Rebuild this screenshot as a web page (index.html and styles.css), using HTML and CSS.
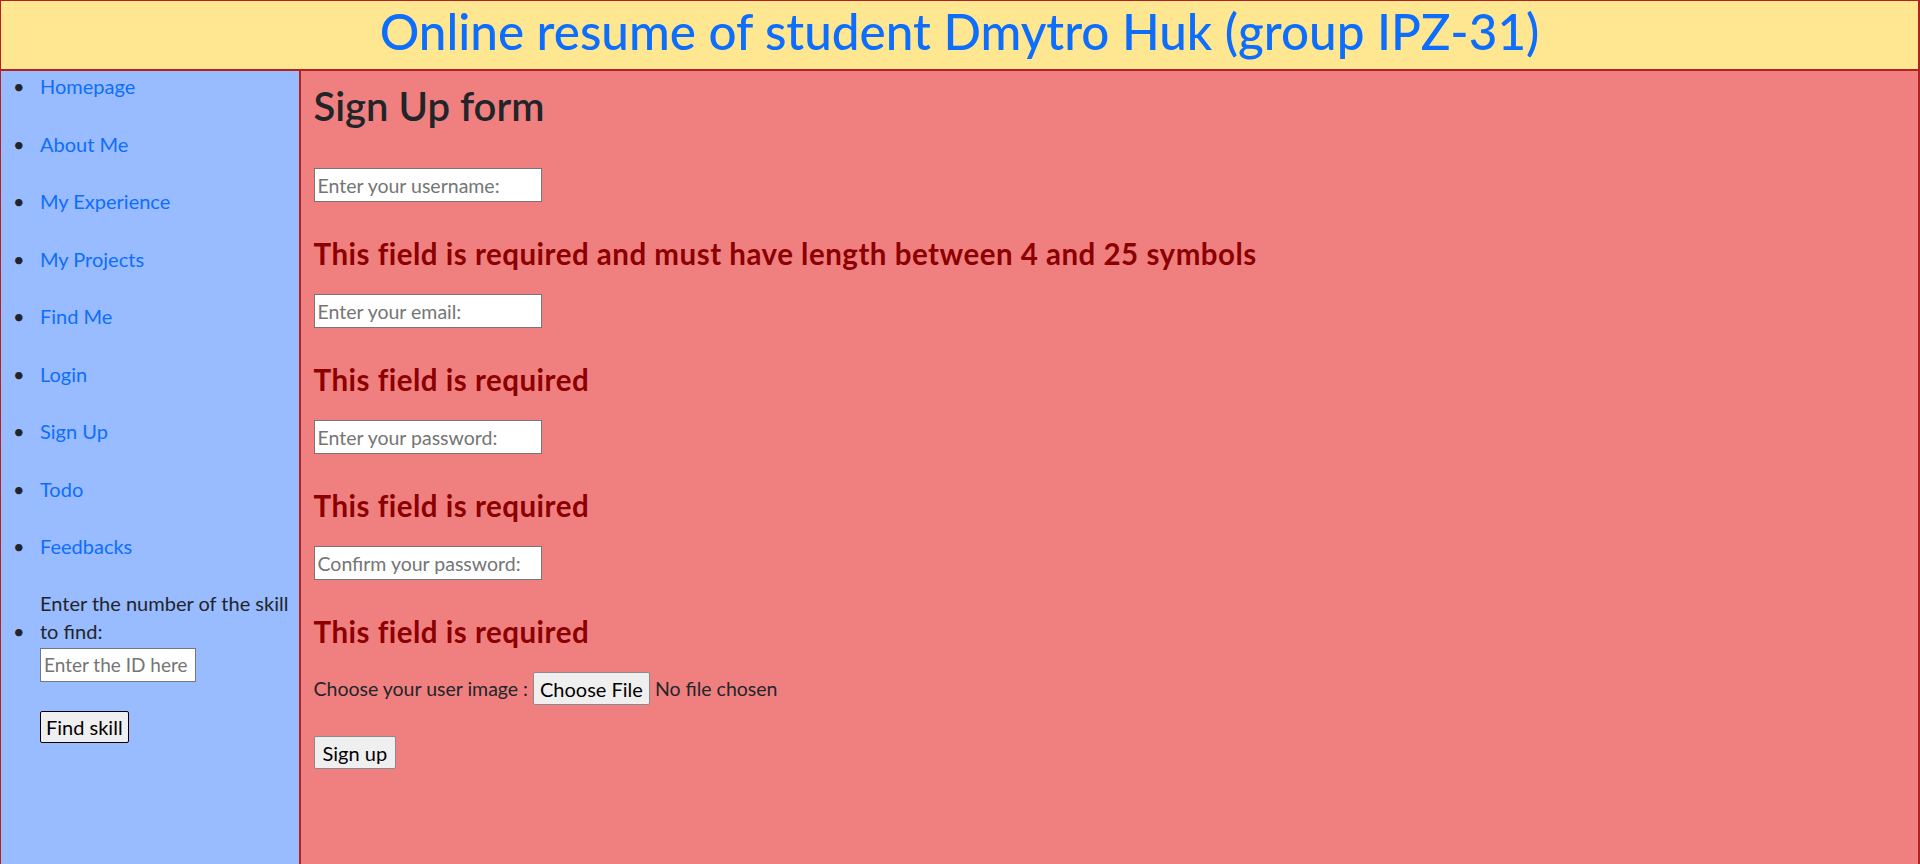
FILE: index.html
```html
<!DOCTYPE html>
<html lang="en">
<head>
<meta charset="utf-8">
<title>Sign Up form</title>
<link rel="stylesheet" href="styles.css">
</head>
<body>
<div class="page">
  <header class="site-header">
    <h1 class="site-title">Online resume of student Dmytro Huk (group IPZ-31)</h1>
  </header>
  <aside class="sidebar">
    <ul class="nav-list">
      <li><a href="#">Homepage</a></li>
      <li><a href="#">About Me</a></li>
      <li><a href="#">My Experience</a></li>
      <li><a href="#">My Projects</a></li>
      <li><a href="#">Find Me</a></li>
      <li><a href="#">Login</a></li>
      <li><a href="#">Sign Up</a></li>
      <li><a href="#">Todo</a></li>
      <li><a href="#">Feedbacks</a></li>
      <li class="skill-item">
        <label class="skill-label" for="skill-id">Enter the number of the skill<br>to find:</label>
        <input class="field skill-input" id="skill-id" type="text" placeholder="Enter the ID here">
        <button class="btn btn-dark" type="button">Find skill</button>
      </li>
    </ul>
  </aside>
  <main class="content">
    <h2 class="form-title">Sign Up form</h2>
    <form class="signup-form">
      <input class="field main-input" type="text" placeholder="Enter your username:">
      <h4 class="error">This field is required and must have length between 4 and 25 symbols</h4>
      <input class="field main-input" type="email" placeholder="Enter your email:">
      <h4 class="error">This field is required</h4>
      <input class="field main-input" type="password" placeholder="Enter your password:">
      <h4 class="error">This field is required</h4>
      <input class="field main-input" type="password" placeholder="Confirm your password:">
      <h4 class="error">This field is required</h4>
      <div class="file-row">
        <span class="file-label">Choose your user image :</span>
        <button class="btn file-btn" type="button">Choose File</button>
        <span class="file-status">No file chosen</span>
      </div>
      <button class="btn submit-btn" type="submit">Sign up</button>
    </form>
  </main>
</div>
</body>
</html>
```

FILE: styles.css
```css
* {
  box-sizing: border-box;
}

html, body {
  margin: 0;
  padding: 0;
}

body {
  font-family: Lato, "Noto Sans", sans-serif;
  font-size: 20px;
  color: #212529;
  background: #f08080;
}

.page {
  display: grid;
  grid-template-columns: 301px 1fr;
  grid-template-rows: 71px 1fr;
  min-height: 100vh;
}

.site-header {
  grid-column: 1 / -1;
  background: #ffe690;
  border-top: 1px solid #b22222;
  border-left: 1px solid #b22222;
  border-right: 2px solid #b22222;
  border-bottom: 2px solid #b22222;
  text-align: center;
}

.site-title {
  margin: 0;
  padding-top: 1px;
  font-size: 49.4px;
  font-weight: 500;
  line-height: 58px;
  color: #0d6efd;
}

.sidebar {
  background: #99bbff;
  border-left: 1px solid #b22222;
  border-right: 2px solid #b22222;
}

.nav-list {
  margin: 0;
  padding: 0 0 0 39px;
}

.nav-list li {
  line-height: 30px;
  margin-bottom: 27.5px;
}

.nav-list li::marker {
  content: "\2022\00a0\00a0\00a0";
}

.nav-list a {
  color: #0d6efd;
  text-decoration: none;
}

.skill-label {
  display: inline-block;
  line-height: 28px;
}

.field {
  display: block;
  height: 34px;
  border: 1px solid #767676;
  border-radius: 0;
  background: #fff;
  font-family: inherit;
  font-size: 19px;
  color: #212529;
  padding: 0 3px;
}

.field::placeholder {
  color: #757575;
}

.skill-input {
  width: 156px;
  margin-top: 2px;
}

.btn {
  font-family: inherit;
  font-size: 20px;
  line-height: 24px;
  height: 33px;
  padding: 0 8px;
  color: #000;
  background: #efefef;
  border: 1px solid #8a8a8a;
  border-radius: 2px;
}

.btn-dark {
  display: block;
  height: 32px;
  margin-top: 29px;
  border-color: #000;
  padding: 0 5px;
}

.content {
  background: #f08080;
  border-right: 2px solid #b22222;
  padding: 11px 0 0 12.5px;
}

.form-title {
  margin: 0;
  font-size: 40px;
  font-weight: 600;
  line-height: 48px;
}

.signup-form {
  display: flex;
  flex-direction: column;
  align-items: flex-start;
  padding-top: 38px;
}

.main-input {
  width: 228px;
  font-size: 19.5px;
}

.error {
  margin: 35px 0 23px;
  font-size: 29.5px;
  font-weight: 700;
  letter-spacing: 0.5px;
  line-height: 34px;
  color: #8b0000;
}

.file-row {
  display: flex;
  align-items: center;
  gap: 5px;
}

.file-label,
.file-status {
  font-size: 19.5px;
  line-height: 30px;
}

.file-btn {
  padding: 0 6px;
}

.submit-btn {
  margin-top: 31px;
}
```
